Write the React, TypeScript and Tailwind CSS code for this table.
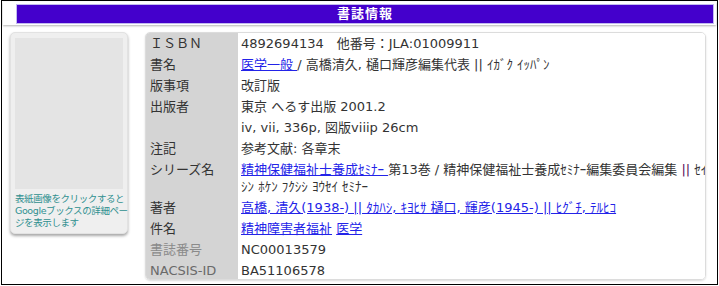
import React from "react";

type Row = {
  label: string;
  muted?: string;
  value: React.ReactNode;
};

const linkCls = "text-[#2323e8] underline";

const rows: Row[] = [
  {
    label: "ＩＳＢＮ",
    value: <>4892694134　他番号：JLA:01009911</>,
  },
  {
    label: "書名",
    value: (
      <>
        <a className={linkCls}>医学一般 </a>/ 高橋清久, 樋口輝彦編集代表 || ｲｶﾞｸ ｲｯﾊﾟﾝ
      </>
    ),
  },
  { label: "版事項", value: <>改訂版</> },
  { label: "出版者", value: <>東京 へるす出版 2001.2</> },
  { label: "", value: <>iv, vii, 336p, 図版viiip 26cm</> },
  { label: "注記", value: <>参考文献: 各章末</> },
  {
    label: "シリーズ名",
    value: (
      <>
        <a className={linkCls}>精神保健福祉士養成ｾﾐﾅｰ </a>第13巻 / 精神保健福祉士養成ｾﾐﾅｰ編集委員会編集{" "}
        <span className="text-[#5a0a5a]">||</span> ｾｲ
        <br />
        ｼﾝ ﾎｹﾝ ﾌｸｼｼ ﾖｳｾｲ ｾﾐﾅｰ
      </>
    ),
  },
  {
    label: "著者",
    value: (
      <a className={linkCls}>
        高橋, 清久(1938-) || ﾀｶﾊｼ, ｷﾖﾋｻ 樋口, 輝彦(1945-) || ﾋｸﾞﾁ, ﾃﾙﾋｺ
      </a>
    ),
  },
  {
    label: "件名",
    value: (
      <>
        <a className={linkCls}>精神障害者福祉</a> <a className={linkCls}>医学</a>
      </>
    ),
  },
  { label: "書誌番号", muted: "text-[#8a8a8a]", value: <>NC00013579</> },
  { label: "NACSIS-ID", muted: "text-[#6a6a6a]", value: <>BA51106578</> },
];

function CoverCard() {
  return (
    <div className="w-[118px] h-[202px] shrink-0 rounded-[5px] bg-[#efefef] border border-[#e2e2e2] shadow-[0_2px_3px_rgba(0,0,0,0.35)] px-[4px] pt-[5px]">
      <div className="h-[151px] bg-[#e4e4e4]" />
      <p className="mt-[4px] text-[9.5px] leading-[12px] text-[#2f8f8f] tracking-[-0.4px] whitespace-nowrap">
        表紙画像をクリックすると
        <br />
        Googleブックスの詳細ペー
        <br />
        ジを表示します
      </p>
    </div>
  );
}

function BiblioTable() {
  return (
    <div className="w-[561px] h-[248px] rounded-[5px] border border-[#dcdcdc] overflow-hidden shadow-[0_1px_2px_rgba(0,0,0,0.15)] flex">
      <div className="w-[92px] shrink-0 bg-[#d4d4d4]">
        {rows.map((r, i) => (
          <div
            key={i}
            className={`px-[4px] py-[2px] leading-[17px] ${r.muted ?? "text-[#333]"} ${
              r.label === "シリーズ名" ? "h-[38px]" : "h-[21px]"
            }`}
          >
            {r.label}
          </div>
        ))}
      </div>
      <div className="flex-1 bg-white text-[#333]">
        {rows.map((r, i) => (
          <div key={i} className="pl-[3px] py-[2px] leading-[17px] whitespace-nowrap">
            {r.value}
          </div>
        ))}
      </div>
    </div>
  );
}

export default function App() {
  return (
    <div
      className="w-[719px] h-[286px] bg-white text-[13px]"
      style={{ fontFamily: '"DejaVu Sans", "Noto Sans CJK JP", sans-serif' }}
    >
      <div className="ml-px w-[717px] h-[285px] border border-black bg-white">
        <div className="mx-[1px] mt-[1px] pt-[2px] pb-px shadow-[0_1px_2px_rgba(0,0,0,0.3)]">
          <div className="ml-[13px] mr-[2px] h-[20px] bg-[#4400cc] border border-[#c2baf0] flex items-center justify-center">
            <span className="text-white font-bold text-[13px] tracking-[1px]">書誌情報</span>
          </div>
        </div>
        <div className="flex gap-[17px] pl-[8px] pt-[7px]">
          <CoverCard />
          <BiblioTable />
        </div>
      </div>
    </div>
  );
}
